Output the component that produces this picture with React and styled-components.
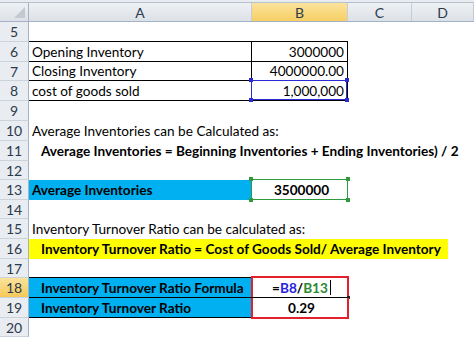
import React from "react";
import styled, { createGlobalStyle } from "styled-components";

const GlobalStyle = createGlobalStyle`
  html, body {
    margin: 0;
    padding: 0;
    background: #ffffff;
  }
  body {
    font-family: Lato, "Open Sans", sans-serif;
    overflow: hidden;
  }
`;

const COLS = "29px 223px 96px 64px 62px";
const FONT = "13.6px";

const Sheet = styled.div`
  width: 474px;
  height: 337px;
  overflow: hidden;
  display: flex;
  flex-direction: column;
`;

const TopStrip = styled.div`
  height: 2px;
  background: #e8ebef;
  border-bottom: 1px solid #b7c1cc;
`;

const HeaderRow = styled.div`
  display: grid;
  grid-template-columns: ${COLS};
  height: 19px;
  box-sizing: border-box;
  border-bottom: 1px solid #a3b3c5;
`;

const ColHead = styled.div`
  display: flex;
  align-items: center;
  justify-content: center;
  font-size: 14px;
  color: #2c3a4d;
  border-right: 1px solid #c4ccd6;
  background: ${(p) =>
    p.$active
      ? "linear-gradient(#fbe39c, #f6cf64)"
      : "linear-gradient(#eef1f4, #dce1e7)"};
`;

const Corner = styled.div`
  position: relative;
  background: linear-gradient(#eef1f4, #dce1e7);
  border-right: 1px solid #a3b3c5;

  &::after {
    content: "";
    position: absolute;
    right: 3px;
    bottom: 3px;
    border-left: 11px solid transparent;
    border-bottom: 11px solid #c4c9cf;
  }
`;

const Row = styled.div`
  display: grid;
  grid-template-columns: ${COLS};
  height: ${(p) => p.$h}px;
`;

const RowHead = styled.div`
  display: flex;
  align-items: center;
  justify-content: center;
  font-size: 14px;
  color: #2c3a4d;
  box-sizing: border-box;
  border-right: 1px solid #a3b3c5;
  border-bottom: 1px solid #cbd2da;
  background: ${(p) =>
    p.$active ? "linear-gradient(#fbe39c, #f4c95a)" : "#e9ecf0"};
`;

const Cell = styled.div`
  position: relative;
  display: flex;
  align-items: center;
  justify-content: ${(p) =>
    p.$align === "right" ? "flex-end" : p.$align === "center" ? "center" : "flex-start"};
  box-sizing: border-box;
  padding: ${(p) => (p.$align === "right" ? "0 3px 0 0" : `0 0 0 ${p.$indent ?? 3}px`)};
  font-size: ${FONT};
  font-weight: ${(p) => (p.$bold ? 700 : 400)};
  color: #000;
  white-space: nowrap;
  overflow: ${(p) => (p.$clip ? "hidden" : "visible")};
  background: ${(p) => p.$fill || "transparent"};
  border-bottom: ${(p) => (p.$bottom ? `1px solid ${p.$bottom}` : "none")};
  border-right: ${(p) => (p.$right ? `1px solid ${p.$right}` : "none")};
  grid-column: ${(p) => (p.$span ? `span ${p.$span}` : "auto")};
  z-index: ${(p) => (p.$over ? 2 : 1)};
`;

const Band = styled.div`
  width: 419px;
  height: 100%;
  box-sizing: border-box;
  display: flex;
  align-items: center;
  padding-left: 12px;
  background: #ffff00;
  font-size: ${FONT};
  font-weight: 700;
  white-space: nowrap;
`;

const Frame = styled.div`
  position: absolute;
  left: -1px;
  top: -1px;
  right: 0;
  bottom: 0;
  border: 1px solid ${(p) => p.$color};
  pointer-events: none;
`;

const Handle = styled.span`
  position: absolute;
  width: 4px;
  height: 4px;
  background: ${(p) => p.$color};
  ${(p) => (p.$x === "l" ? "left: -3px;" : "right: -3px;")}
  ${(p) => (p.$y === "t" ? "top: -3px;" : "bottom: -3px;")}
`;

const RedBox = styled.div`
  position: absolute;
  left: -1px;
  right: -1px;
  top: ${(p) => (p.$part === "top" ? "-2px" : "0")};
  bottom: ${(p) => (p.$part === "top" ? "0" : "-1px")};
  border: 2px solid #e3202b;
  border-top-width: ${(p) => (p.$part === "top" ? "2px" : "0")};
  border-bottom-width: ${(p) => (p.$part === "top" ? "0" : "2px")};
  pointer-events: none;
`;

const Ref = styled.span`
  color: ${(p) => p.$color};
`;

const Caret = styled.span`
  display: inline-block;
  width: 1px;
  height: 15px;
  margin-left: 2px;
  background: #000;
`;

const FillDot = styled.span`
  position: absolute;
  right: -2px;
  bottom: -2px;
  width: 3px;
  height: 3px;
  background: #222;
  z-index: 3;
`;

function Selection({ color }) {
  return (
    <Frame $color={color}>
      <Handle $color={color} $x="l" $y="t" />
      <Handle $color={color} $x="r" $y="t" />
      <Handle $color={color} $x="l" $y="b" />
      <Handle $color={color} $x="r" $y="b" />
    </Frame>
  );
}

const heights = {
  5: 20, 6: 20, 7: 19, 8: 20, 9: 20, 10: 20, 11: 20, 12: 19,
  13: 20, 14: 19, 15: 20, 16: 20, 17: 19, 18: 20, 19: 20, 20: 19,
};

function EmptyCells({ n = 4 }) {
  return Array.from({ length: n }).map((_, i) => <Cell key={i} />);
}

export default function App() {
  return (
    <Sheet>
      <GlobalStyle />
      <TopStrip />
      <HeaderRow>
        <Corner />
        <ColHead>A</ColHead>
        <ColHead $active>B</ColHead>
        <ColHead>C</ColHead>
        <ColHead>D</ColHead>
      </HeaderRow>

      <Row $h={heights[5]}>
        <RowHead>5</RowHead>
        <Cell $bottom="#000" />
        <Cell $bottom="#000" />
        <Cell />
        <Cell />
      </Row>
      <Row $h={heights[6]}>
        <RowHead>6</RowHead>
        <Cell $bottom="#000" $right="#000">Opening Inventory</Cell>
        <Cell $bottom="#000" $right="#000" $align="right">3000000</Cell>
        <EmptyCells n={2} />
      </Row>
      <Row $h={heights[7]}>
        <RowHead>7</RowHead>
        <Cell $bottom="#000" $right="#000">Closing Inventory</Cell>
        <Cell $bottom="#000" $right="#000" $align="right">4000000.00</Cell>
        <EmptyCells n={2} />
      </Row>
      <Row $h={heights[8]}>
        <RowHead>8</RowHead>
        <Cell $bottom="#000" $right="#000">cost of goods sold</Cell>
        <Cell $bottom="#000" $right="#000" $align="right" $over>
          1,000,000
          <Selection color="#2b2bd6" />
        </Cell>
        <EmptyCells n={2} />
      </Row>
      <Row $h={heights[9]}>
        <RowHead>9</RowHead>
        <EmptyCells />
      </Row>
      <Row $h={heights[10]}>
        <RowHead>10</RowHead>
        <Cell>Average Inventories can be Calculated as:</Cell>
        <EmptyCells n={3} />
      </Row>
      <Row $h={heights[11]}>
        <RowHead>11</RowHead>
        <Cell $bold $indent={12}>
          Average Inventories = Beginning Inventories + Ending Inventories) / 2
        </Cell>
        <EmptyCells n={3} />
      </Row>
      <Row $h={heights[12]}>
        <RowHead>12</RowHead>
        <EmptyCells />
      </Row>
      <Row $h={heights[13]}>
        <RowHead>13</RowHead>
        <Cell $bold $fill="#00b0f0" $right="#000" $clip>Average Inventories</Cell>
        <Cell $bold $align="center" $over>
          3500000
          <Selection color="#2f9a3c" />
        </Cell>
        <EmptyCells n={2} />
      </Row>
      <Row $h={heights[14]}>
        <RowHead>14</RowHead>
        <EmptyCells />
      </Row>
      <Row $h={heights[15]}>
        <RowHead>15</RowHead>
        <Cell>Inventory Turnover Ratio can be calculated as:</Cell>
        <EmptyCells n={3} />
      </Row>
      <Row $h={heights[16]}>
        <RowHead>16</RowHead>
        <Cell $span={4} $indent={0}>
          <Band>Inventory Turnover Ratio = Cost of Goods Sold/ Average Inventory</Band>
        </Cell>
      </Row>
      <Row $h={heights[17]}>
        <RowHead>17</RowHead>
        <Cell $bottom="#000" />
        <EmptyCells n={3} />
      </Row>
      <Row $h={heights[18]}>
        <RowHead $active>18</RowHead>
        <Cell $bold $indent={12} $fill="#00b0f0" $bottom="#000" $clip>
          Inventory Turnover Ratio Formula
        </Cell>
        <Cell $bold $align="center" $bottom="#000" $over>
          =<Ref $color="#2424e0">B8</Ref>/<Ref $color="#2a8a2f">B13</Ref>
          <Caret />
          <RedBox $part="top" />
          <FillDot />
        </Cell>
        <EmptyCells n={2} />
      </Row>
      <Row $h={heights[19]}>
        <RowHead>19</RowHead>
        <Cell $bold $indent={12} $fill="#00b0f0" $bottom="#000" $clip>
          Inventory Turnover Ratio
        </Cell>
        <Cell $bold $align="center" $over>
          0.29
          <RedBox $part="bottom" />
        </Cell>
        <EmptyCells n={2} />
      </Row>
      <Row $h={heights[20]}>
        <RowHead>20</RowHead>
        <EmptyCells />
      </Row>
    </Sheet>
  );
}
